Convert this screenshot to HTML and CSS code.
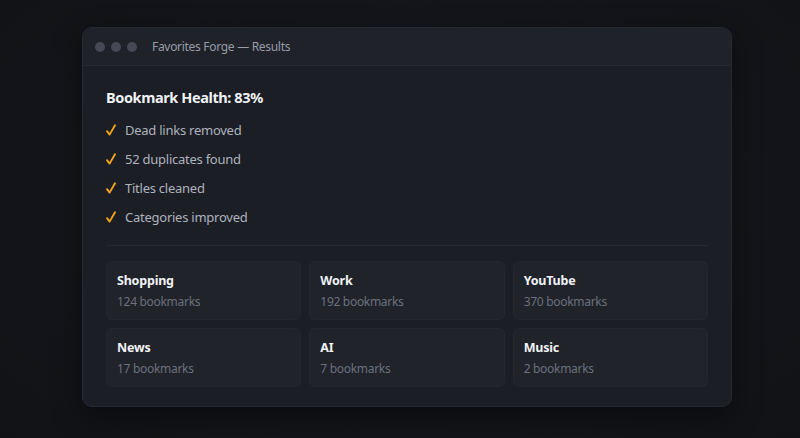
FILE: index.html
```html
<!DOCTYPE html>
<html>
<head>
<meta charset="utf-8">
<link rel="stylesheet" href="styles.css">
</head>
<body>
<div class="stage">
  <div class="window">
    <div class="titlebar">
      <div class="dots"><span class="dot"></span><span class="dot"></span><span class="dot"></span></div>
      <div class="title">Favorites Forge — Results</div>
    </div>
    <div class="content">
      <h1 class="heading">Bookmark Health: 83%</h1>
      <ul class="checks">
        <li><svg class="check" viewBox="0 0 10 12" width="10" height="12"><path d="M1 7.2 L3.6 10.6 L9 1.2" fill="none" stroke="#f5a21b" stroke-width="1.9" stroke-linecap="round" stroke-linejoin="round"/></svg>Dead links removed</li>
        <li><svg class="check" viewBox="0 0 10 12" width="10" height="12"><path d="M1 7.2 L3.6 10.6 L9 1.2" fill="none" stroke="#f5a21b" stroke-width="1.9" stroke-linecap="round" stroke-linejoin="round"/></svg>52 duplicates found</li>
        <li><svg class="check" viewBox="0 0 10 12" width="10" height="12"><path d="M1 7.2 L3.6 10.6 L9 1.2" fill="none" stroke="#f5a21b" stroke-width="1.9" stroke-linecap="round" stroke-linejoin="round"/></svg>Titles cleaned</li>
        <li><svg class="check" viewBox="0 0 10 12" width="10" height="12"><path d="M1 7.2 L3.6 10.6 L9 1.2" fill="none" stroke="#f5a21b" stroke-width="1.9" stroke-linecap="round" stroke-linejoin="round"/></svg>Categories improved</li>
      </ul>
      <div class="divider"></div>
      <div class="grid">
        <div class="card"><div class="card-title">Shopping</div><div class="card-sub">124 bookmarks</div></div>
        <div class="card"><div class="card-title">Work</div><div class="card-sub">192 bookmarks</div></div>
        <div class="card"><div class="card-title">YouTube</div><div class="card-sub">370 bookmarks</div></div>
        <div class="card"><div class="card-title">News</div><div class="card-sub">17 bookmarks</div></div>
        <div class="card"><div class="card-title">AI</div><div class="card-sub">7 bookmarks</div></div>
        <div class="card"><div class="card-title">Music</div><div class="card-sub">2 bookmarks</div></div>
      </div>
    </div>
  </div>
</div>
</body>
</html>
```

FILE: styles.css
```css
html, body {
  margin: 0;
  padding: 0;
  height: 100%;
}
body {
  background: radial-gradient(ellipse at 50% 45%, #191b21 0%, #14151a 60%, #111216 100%);
  font-family: "Noto Sans", "Open Sans", "DejaVu Sans", sans-serif;
  color: #b4b9c3;
}
.stage {
  padding: 27px 0 0 82px;
}
.window {
  width: 650px;
  height: 380px;
  box-sizing: border-box;
  background: #1b1e25;
  border: 1px solid #262932;
  border-radius: 10px;
  box-shadow: 0 10px 30px rgba(0, 0, 0, 0.45);
  overflow: hidden;
  display: flex;
  flex-direction: column;
}
.titlebar {
  height: 37px;
  flex: none;
  background: #1f2229;
  border-bottom: 1px solid #272a32;
  display: flex;
  align-items: center;
  padding-left: 12px;
}
.dots {
  display: flex;
  gap: 6px;
}
.dot {
  width: 10px;
  height: 10px;
  border-radius: 50%;
  background: #474a54;
}
.title {
  margin-left: 15px;
  font-size: 12px;
  letter-spacing: -0.3px;
  color: #979ca7;
}
.content {
  padding: 21px 23px 0 23px;
}
.heading {
  margin: 0;
  font-size: 14.5px;
  line-height: 20px;
  font-weight: 700;
  letter-spacing: -0.4px;
  color: #f1f2f5;
}
.checks {
  list-style: none;
  margin: 13px 0 0 0;
  padding: 0;
  display: flex;
  flex-direction: column;
  gap: 9px;
}
.checks li {
  display: flex;
  align-items: center;
  height: 20px;
  font-size: 13px;
  letter-spacing: -0.25px;
  color: #aeb3bd;
}
.check {
  margin-right: 9px;
  flex: none;
}
.divider {
  height: 1px;
  background: #262931;
  margin: 18px 0 15px 0;
}
.grid {
  display: grid;
  grid-template-columns: repeat(3, 1fr);
  gap: 8px;
}
.card {
  height: 59px;
  box-sizing: border-box;
  background: #20232a;
  border: 1px solid #24272e;
  border-radius: 6px;
  padding: 10px 10px 0 10px;
}
.card-title {
  font-size: 12.5px;
  line-height: 18px;
  font-weight: 700;
  letter-spacing: -0.2px;
  color: #f1f2f5;
}
.card-sub {
  margin-top: 3px;
  font-size: 12px;
  line-height: 18px;
  letter-spacing: -0.3px;
  color: #6b707c;
}
```
